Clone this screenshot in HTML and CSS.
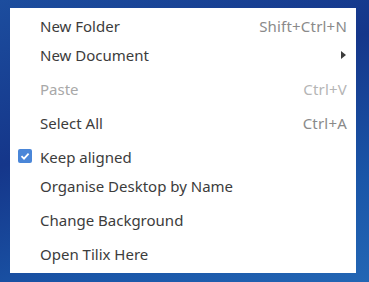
FILE: index.html
```html
<!DOCTYPE html>
<html lang="en">
<head>
    <meta charset="UTF-8">
    <meta name="viewport" content="width=device-width, initial-scale=1.0">
    <title>Desktop Menu</title>
    <link rel="stylesheet" href="styles.css">
</head>
<body>

    <div class="menu">
        <div class="item">
            <span class="label">New Folder</span>
            <span class="accel">Shift+Ctrl+N</span>
        </div>
        <div class="item">
            <span class="label">New Document</span>
            <span class="arrow"></span>
        </div>
        <div class="sep"></div>
        <div class="item disabled">
            <span class="label">Paste</span>
            <span class="accel">Ctrl+V</span>
        </div>
        <div class="sep"></div>
        <div class="item">
            <span class="label">Select All</span>
            <span class="accel">Ctrl+A</span>
        </div>
        <div class="sep"></div>
        <div class="item">
            <span class="check">
                <svg width="14" height="14" viewBox="0 0 14 14">
                    <rect x="0" y="0" width="14" height="14" rx="2" fill="#4a86d8"/>
                    <path d="M3.5 7.2 L6 9.6 L10.6 4.6" fill="none" stroke="#fff" stroke-width="1.8"/>
                </svg>
            </span>
            <span class="label">Keep aligned</span>
        </div>
        <div class="item">
            <span class="label">Organise Desktop by Name</span>
        </div>
        <div class="sep"></div>
        <div class="item">
            <span class="label">Change Background</span>
        </div>
        <div class="sep"></div>
        <div class="item">
            <span class="label">Open Tilix Here</span>
        </div>
    </div>

</body>
</html>
```

FILE: styles.css
```css
body{
    margin: 0;
    width: 369px;
    height: 282px;
    overflow: hidden;
    background: linear-gradient(160deg, #1c4d9e 0%, #15368a 40%, #1a56a8 75%, #2366b4 100%);
    font-family: "Noto Sans", "Open Sans", sans-serif;
    font-size: 15px;
    color: #3c3c3c;
}

.menu{
    margin: 8px 0 0 10px;
    width: 346px;
    padding: 3px 0 5px;
    background-color: #fff;
    box-sizing: border-box;
}

.item{
    height: 29px;
    display: flex;
    align-items: center;
    padding: 0 9px 0 30px;
    position: relative;
}

.label{
    flex: 1;
    white-space: nowrap;
}

.accel{
    color: #8a8a8a;
    letter-spacing: 0.2px;
}

.disabled .label{
    color: #a8a8a8;
}

.disabled .accel{
    color: #b5b5b5;
}

.sep{
    height: 5px;
}

.arrow{
    width: 0;
    height: 0;
    margin-right: 1px;
    border-top: 4px solid transparent;
    border-bottom: 4px solid transparent;
    border-left: 5px solid #3c3c3c;
}

.check{
    position: absolute;
    left: 8px;
    top: 7px;
    width: 14px;
    height: 14px;
}

.check svg{
    display: block;
}
```
